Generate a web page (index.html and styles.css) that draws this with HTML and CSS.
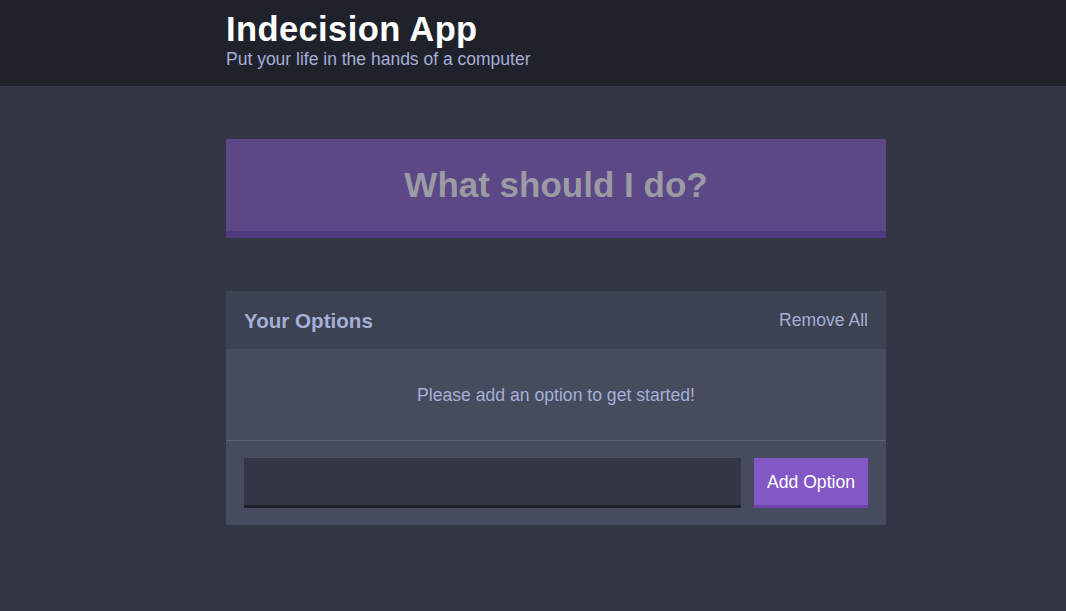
FILE: index.html
```html
<!DOCTYPE html>
<html>
<head>
<meta charset="utf-8">
<link rel="stylesheet" href="styles.css">
</head>
<body>
<header class="header">
  <div class="container">
    <h1 class="header__title">Indecision App</h1>
    <h2 class="header__subtitle">Put your life in the hands of a computer</h2>
  </div>
</header>
<main class="container main">
  <button class="big-button" disabled>What should I do?</button>
  <section class="widget">
    <div class="widget-header">
      <h3 class="widget-header__title">Your Options</h3>
      <button class="button--link">Remove All</button>
    </div>
    <p class="widget__message">Please add an option to get started!</p>
    <form class="add-option">
      <input class="add-option__input" type="text" name="option">
      <button class="button" type="button">Add Option</button>
    </form>
  </section>
</main>
</body>
</html>
```

FILE: styles.css
```css
* { box-sizing: border-box; }
html, body { margin: 0; padding: 0; }
body {
  background: #333745;
  font-family: "Liberation Sans", Arial, Helvetica, sans-serif;
  color: #ffffff;
  height: 611px;
}
.container {
  width: 660px;
  margin-left: 226px;
}
.header {
  background: #20222b;
  padding: 10px 0 17px;
}
.header__title {
  margin: 0;
  font-size: 34.5px;
  line-height: 38px;
  letter-spacing: 0.4px;
  font-weight: bold;
  color: #ffffff;
}
.header__subtitle {
  margin: 1px 0 0;
  font-size: 17.5px;
  line-height: 20px;
  font-weight: normal;
  color: #a5afd7;
}
.main {
  padding-top: 53px;
}
.big-button {
  display: flex;
  align-items: center;
  justify-content: center;
  width: 100%;
  height: 99px;
  margin: 0 0 53px;
  padding: 0;
  border: none;
  border-bottom: 7px solid #513b7f;
  background: #5c4887;
  color: #9a9ba3;
  font-family: inherit;
  font-size: 35px;
  font-weight: bold;
}
.widget {
  background: #464b5e;
}
.widget-header {
  background: #3c4251;
  height: 58px;
  padding: 0 18px;
  display: flex;
  align-items: center;
  justify-content: space-between;
}
.widget-header__title {
  margin: 2px 0 0;
  font-size: 20.6px;
  font-weight: bold;
  color: #a5afd7;
}
.button--link {
  background: none;
  border: none;
  padding: 0;
  font-family: inherit;
  font-size: 17.6px;
  color: #a5afd7;
}
.widget__message {
  margin: 0;
  height: 92px;
  padding-top: 2px;
  border-bottom: 1px solid #5a5f72;
  display: flex;
  align-items: center;
  justify-content: center;
  color: #a5afd7;
  font-size: 17.6px;
}
.add-option {
  display: flex;
  gap: 13px;
  padding: 17px 18px;
  margin: 0;
}
.add-option__input {
  flex: 1;
  height: 50px;
  background: #333745;
  border: none;
  border-bottom: 3px solid #20222b;
  color: #a5afd7;
  font-size: 18px;
  padding: 0 12px;
  outline: none;
}
.button {
  width: 114px;
  height: 50px;
  background: #8357c5;
  border: none;
  border-bottom: 3px solid #6f43ae;
  color: #ffffff;
  font-family: inherit;
  font-size: 17.6px;
  padding: 2px 0 0;
}
```
